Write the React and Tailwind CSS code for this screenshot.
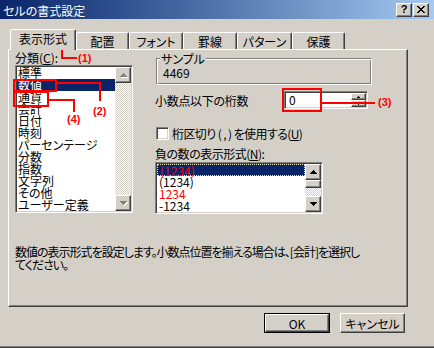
import { useState } from "react";

const raised =
  "border border-t-white border-l-white border-r-[#404040] border-b-[#404040] shadow-[inset_-1px_-1px_0_#808080]";
const sunken =
  "border border-t-[#808080] border-l-[#808080] border-r-white border-b-white shadow-[inset_1px_1px_0_#404040,inset_-1px_-1px_0_#d4d0c8]";
const dither =
  "bg-[repeating-conic-gradient(#ffffff_0%_25%,#d4d0c8_0%_50%)] bg-[length:2px_2px]";

const categories = [
  "標準",
  "数値",
  "通貨",
  "会計",
  "日付",
  "時刻",
  "パーセンテージ",
  "分数",
  "指数",
  "文字列",
  "その他",
  "ユーザー定義",
];

const negatives = [
  { text: "(1234)", red: true },
  { text: "(1234)", red: false },
  { text: "1234", red: true },
  { text: "-1234", red: false },
];

const tabs = [
  { label: "表示形式", w: "w-[66px]" },
  { label: "配置", w: "w-[53px]" },
  { label: "フォント", w: "w-[54px]" },
  { label: "罫線", w: "w-[54px]" },
  { label: "パターン", w: "w-[55px]" },
  { label: "保護", w: "w-[53px]" },
];

// pixel triangle, drawn row by row so it stays crisp
function Arrow({ dir = "up", color = "#000000", size = 4 }) {
  const rows = [];
  for (let i = 0; i < size; i++) {
    const y = dir === "up" ? i : size - 1 - i;
    rows.push(<rect key={i} x={size - 1 - i} y={y} width={i * 2 + 1} height="1" fill={color} />);
  }
  return (
    <svg width={size * 2 - 1} height={size} shapeRendering="crispEdges">
      {rows}
    </svg>
  );
}

function GrayArrow({ dir }) {
  return (
    <span className="relative inline-flex">
      <span className="absolute left-[1px] top-[1px]">
        <Arrow dir={dir} color="#ffffff" />
      </span>
      <span className="relative">
        <Arrow dir={dir} color="#808080" />
      </span>
    </span>
  );
}

function ScrollButton({ dir, disabled }) {
  return (
    <div className={`w-[16px] h-[16px] shrink-0 bg-[#d4d0c8] flex items-center justify-center ${raised}`}>
      {disabled ? <GrayArrow dir={dir} /> : <Arrow dir={dir} />}
    </div>
  );
}

function TitleBar() {
  return (
    <div className="h-[19px] shrink-0 flex items-center bg-gradient-to-r from-[#0a246a] to-[#a6caf0] pl-[3px] pr-[5px]">
      <span className="text-white text-[12px] leading-[13px] mt-[1px]">セルの書式設定</span>
      <div className="ml-auto flex gap-[1px]">
        <div className={`w-[16px] h-[14px] bg-[#d4d0c8] flex items-center justify-center ${raised}`}>
          <span className="font-['Liberation_Sans',sans-serif] font-bold text-[11px] leading-[11px] text-black">?</span>
        </div>
        <div className={`w-[16px] h-[14px] bg-[#d4d0c8] flex items-center justify-center ${raised}`}>
          <svg width="8" height="7" shapeRendering="crispEdges">
            <path d="M0 0h2v1H0zM6 0h2v1H6zM1 1h2v1H1zM5 1h2v1H5zM2 2h4v1H2zM3 3h2v1H3zM2 4h4v1H2zM1 5h2v1H1zM5 5h2v1H5zM0 6h2v1H0zM6 6h2v1H6z" fill="#000" />
          </svg>
        </div>
      </div>
    </div>
  );
}

function Tabs({ active, onSelect }) {
  return (
    <div className="relative z-10 h-[20px] mt-[10px] pl-[10px] flex items-end shrink-0">
      {tabs.map((t, i) =>
        i === active ? (
          <button
            key={t.label}
            onClick={() => onSelect(i)}
            className={`${t.w} h-[21px] -mb-[1px] bg-[#d4d0c8] border-l border-t border-white border-r border-r-[#404040] rounded-tl-[2px] rounded-tr-[2px] shadow-[inset_-1px_0_0_#808080] text-[12px] leading-[13px] pt-[2px] flex justify-center items-start`}
          >
            {t.label}
          </button>
        ) : (
          <button
            key={t.label}
            onClick={() => onSelect(i)}
            className={`${t.w} h-[17px] bg-[#d4d0c8] border-l border-t border-white border-r border-r-[#404040] rounded-tl-[2px] rounded-tr-[2px] shadow-[inset_-1px_0_0_#808080] text-[12px] leading-[13px] pt-[2px] flex justify-center items-start`}
          >
            {t.label}
          </button>
        )
      )}
    </div>
  );
}

function CategoryList({ selected, onSelect }) {
  return (
    <div className={`w-[118px] h-[148px] bg-white flex p-[1px] ${sunken}`}>
      <div className="flex-1 flex flex-col">
        {categories.map((c, i) => (
          <div
            key={c}
            onClick={() => onSelect(i)}
            className={`h-[12px] leading-[12px] pl-[1px] whitespace-nowrap ${
              i === selected ? "bg-[#0a246a] text-white" : "text-black"
            }`}
          >
            {c}
          </div>
        ))}
      </div>
      <div className="w-[16px] flex flex-col">
        <ScrollButton dir="up" disabled />
        <div className={`flex-1 ${dither}`} />
        <ScrollButton dir="down" disabled />
      </div>
    </div>
  );
}

function NegativeList() {
  return (
    <div className={`w-[168px] h-[52px] bg-white flex p-[1px] ${sunken}`}>
      <div className="flex-1 flex flex-col">
        {negatives.map((n, i) => (
          <div
            key={i}
            className={`h-[12px] leading-[12px] pl-[2px] ${i === 0 ? "bg-[#0a246a] border border-dotted border-[#e8e8c0] pl-[1px] leading-[10px]" : ""} ${
              n.red ? "text-[#ff0000]" : "text-black"
            }`}
          >
            {n.text}
          </div>
        ))}
      </div>
      <div className="w-[16px] flex flex-col">
        <ScrollButton dir="up" />
        <div className={`h-[8px] bg-[#d4d0c8] ${raised}`} />
        <div className={`flex-1 ${dither}`} />
        <ScrollButton dir="down" />
      </div>
    </div>
  );
}

function SpinBox() {
  return (
    <div className={`w-[84px] h-[18px] bg-white flex p-[1px] ${sunken}`}>
      <div className="flex-1 pl-[3px] leading-[14px] text-black">0</div>
      <div className="w-[15px] flex flex-col">
        <div className={`h-[7px] bg-[#d4d0c8] flex items-center justify-center ${raised}`}>
          <Arrow dir="up" size={2} />
        </div>
        <div className={`h-[7px] bg-[#d4d0c8] flex items-center justify-center ${raised}`}>
          <Arrow dir="down" size={2} />
        </div>
      </div>
    </div>
  );
}

function Annotations() {
  const label = "absolute font-['Liberation_Sans',sans-serif] font-bold text-[11px] leading-[11px] text-[#ff0000]";
  return (
    <div className="pointer-events-none">
      {/* (1) */}
      <div className="absolute left-[11px] top-[29px] w-[61px] h-[21px] border-2 border-[#ff0000]" />
      <div className="absolute left-[61px] top-[50px] w-[2px] h-[9px] bg-[#ff0000]" />
      <div className="absolute left-[61px] top-[57px] w-[16px] h-[2px] bg-[#ff0000]" />
      <div className={`${label} left-[78px] top-[53px]`}>(1)</div>
      {/* (2) */}
      <div className="absolute left-[13px] top-[79px] w-[44px] h-[13px] border-2 border-[#ff0000]" />
      <div className="absolute left-[57px] top-[82px] w-[44px] h-[2px] bg-[#ff0000]" />
      <div className="absolute left-[99px] top-[82px] w-[2px] h-[19px] bg-[#ff0000]" />
      <div className={`${label} left-[93px] top-[106px]`}>(2)</div>
      {/* (4) */}
      <div className="absolute left-[13px] top-[91px] w-[36px] h-[16px] border-2 border-[#ff0000]" />
      <div className="absolute left-[49px] top-[99px] w-[26px] h-[2px] bg-[#ff0000]" />
      <div className="absolute left-[73px] top-[99px] w-[2px] h-[13px] bg-[#ff0000]" />
      <div className={`${label} left-[67px] top-[114px]`}>(4)</div>
      {/* (3) */}
      <div className="absolute left-[282px] top-[88px] w-[40px] h-[24px] border-2 border-[#ff0000]" />
      <div className="absolute left-[322px] top-[102px] w-[53px] h-[2px] bg-[#ff0000]" />
      <div className={`${label} left-[378px] top-[97px]`}>(3)</div>
    </div>
  );
}

export default function App() {
  const [tab, setTab] = useState(0);
  const [category, setCategory] = useState(1);
  const [sep, setSep] = useState(false);

  return (
    <div className="relative w-[434px] h-[348px] overflow-hidden bg-[#d4d0c8] flex flex-col font-['Noto_Sans_CJK_JP',sans-serif] [font-feature-settings:'palt'] text-[12px] leading-[13px] text-black shadow-[inset_0_-1px_0_#404040,inset_0_-2px_0_#808080]">
      <TitleBar />
      <Tabs active={tab} onSelect={setTab} />

      <div className="ml-[8px] w-[400px] h-[258px] shrink-0 border border-t-white border-l-white border-r-[#404040] border-b-[#404040] shadow-[inset_-1px_-1px_0_#808080] pl-[6px] pt-[1px] flex flex-col">
        <div className="flex">
          <div className="w-[118px] flex flex-col">
            <div className="h-[14px] leading-[13px]">
              分類(<span className="underline">C</span>):
            </div>
            <CategoryList selected={category} onSelect={setCategory} />
          </div>

          <div className="ml-[22px] w-[218px] flex flex-col">
            <div className="relative mt-[7px] ml-[1px] w-[216px] h-[27px] border border-t-[#808080] border-l-[#808080] border-r-white border-b-white shadow-[inset_1px_1px_0_#ffffff,inset_-1px_-1px_0_#808080]">
              <span className="absolute left-[3px] -top-[7px] px-[1px] bg-[#d4d0c8] leading-[13px]">サンプル</span>
              <div className="pl-[6px] pt-[7px] leading-[13px]">4469</div>
            </div>

            <div className="mt-[6px] flex items-center h-[18px]">
              <span className="w-[129px] shrink-0 tracking-[-0.3px]">小数点以下の桁数</span>
              <SpinBox />
            </div>

            <label className="mt-[18px] ml-[1px] flex items-center gap-[3px] h-[13px]">
              <span
                onClick={() => setSep(!sep)}
                className={`w-[13px] h-[13px] bg-white shrink-0 flex items-center justify-center ${sunken}`}
              >
                {sep && (
                  <svg width="7" height="7" shapeRendering="crispEdges">
                    <path d="M6 0h1v3H6zM5 1h1v3H5zM0 2h1v3H0zM1 3h1v3H1zM2 4h1v3H2zM3 3h1v3H3zM4 2h1v3H4z" fill="#000" />
                  </svg>
                )}
              </span>
              <span className="whitespace-pre tracking-[-0.6px]">
                桁区切り ( , ) を使用する(<span className="underline">U</span>)
              </span>
            </label>

            <div className="mt-[7px] h-[15px] whitespace-nowrap tracking-[-0.5px]">
              負の数の表示形式(<span className="underline">N</span>):
            </div>
            <NegativeList />
          </div>
        </div>

        <p className="mt-[31px] leading-[13px] whitespace-nowrap tracking-[-1px]">
          数値の表示形式を設定します。小数点位置を揃える場合は、[会計]を選択し
          <br />
          てください。
        </p>
      </div>

      <div className="mt-[6px] flex pl-[264px] gap-[10px]">
        <div className="w-[66px] h-[20px] border border-black">
          <div className={`w-full h-full flex items-center justify-center bg-[#d4d0c8] ${raised}`}>OK</div>
        </div>
        <div className={`w-[65px] h-[20px] flex items-center justify-center bg-[#d4d0c8] ${raised}`}>キャンセル</div>
      </div>

      <Annotations />
    </div>
  );
}
